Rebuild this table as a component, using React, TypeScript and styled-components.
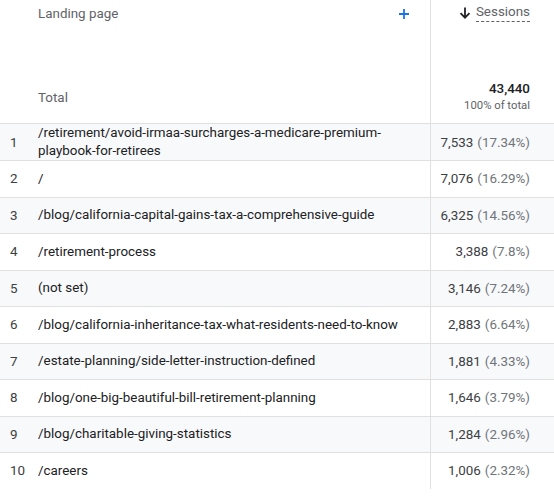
import React from "react";
import styled, { createGlobalStyle } from "styled-components";

const Global = createGlobalStyle`
  html, body { margin: 0; padding: 0; background: #ffffff; }
  body { font-family: Roboto, "Noto Sans", Arial, sans-serif; }
`;

const Table = styled.div`
  width: 554px;
  display: flex;
  flex-direction: column;
  font-family: Roboto, "Noto Sans", Arial, sans-serif;
  font-size: 13.4px;
  color: #3c4043;
`;

const Grid = styled.div`
  display: grid;
  grid-template-columns: 38px 392px 124px;
`;

const HeaderRow = styled(Grid)`
  height: 71px;
`;

const TotalRow = styled(Grid)`
  height: 52px;
  align-items: stretch;
`;

const DataRow = styled(Grid)<{ $shaded: boolean }>`
  min-height: 35.5px;
  border-top: 1px solid #e0e0e0;
  background: ${(p) => (p.$shaded ? "#f8f9fa" : "#ffffff")};
`;

const HeadDim = styled.div`
  grid-column: 1 / 3;
  display: flex;
  align-items: flex-start;
  justify-content: space-between;
  padding: 4px 20px 0 38px;
  line-height: 20px;
  color: #5f6368;
`;

const AddButton = styled.span`
  display: flex;
  width: 12px;
  height: 20px;
  align-items: center;
  justify-content: center;
`;

const HeadMetric = styled.div`
  border-left: 1px solid #e0e0e0;
  display: flex;
  justify-content: flex-end;
  align-items: flex-start;
  padding: 3px 24px 0 0;
  gap: 5px;
`;

const SortArrow = styled.span`
  display: flex;
  height: 20px;
  align-items: center;
`;

const MetricName = styled.span`
  line-height: 18px;
  color: #5f6368;
  border-bottom: 1px dashed #5f6368;
`;

const TotalLabel = styled.div`
  grid-column: 1 / 3;
  display: flex;
  align-items: center;
  padding-left: 38px;
  color: #5f6368;
`;

const TotalCell = styled.div`
  border-left: 1px solid #e0e0e0;
  display: flex;
  flex-direction: column;
  align-items: flex-end;
  justify-content: center;
  padding-right: 24px;
`;

const TotalValue = styled.span`
  font-weight: 500;
  font-size: 13.4px;
  line-height: 18px;
  color: #202124;
`;

const TotalSub = styled.span`
  font-size: 11.3px;
  line-height: 16px;
  color: #5f6368;
`;

const IndexCell = styled.div`
  display: flex;
  align-items: center;
  padding-left: 10px;
  color: #3c4043;
`;

const NameCell = styled.div`
  display: flex;
  align-items: center;
  padding-right: 14px;
  line-height: 18px;
  color: #202124;
`;

const ValueCell = styled.div`
  border-left: 1px solid #e0e0e0;
  display: flex;
  align-items: center;
  justify-content: flex-end;
  padding-right: 24px;
  color: #3c4043;
  white-space: nowrap;
`;

const Pct = styled.span`
  color: #70757a;
  margin-left: 4px;
`;

const rows: [string, string, string][] = [
  ["/retirement/avoid-irmaa-surcharges-a-medicare-premium-playbook-for-retirees", "7,533", "(17.34%)"],
  ["/", "7,076", "(16.29%)"],
  ["/blog/california-capital-gains-tax-a-comprehensive-guide", "6,325", "(14.56%)"],
  ["/retirement-process", "3,388", "(7.8%)"],
  ["(not set)", "3,146", "(7.24%)"],
  ["/blog/california-inheritance-tax-what-residents-need-to-know", "2,883", "(6.64%)"],
  ["/estate-planning/side-letter-instruction-defined", "1,881", "(4.33%)"],
  ["/blog/one-big-beautiful-bill-retirement-planning", "1,646", "(3.79%)"],
  ["/blog/charitable-giving-statistics", "1,284", "(2.96%)"],
  ["/careers", "1,006", "(2.32%)"],
];

export default function App() {
  return (
    <>
      <Global />
      <Table>
        <HeaderRow>
          <HeadDim>
            <span>Landing page</span>
            <AddButton>
              <svg width="12" height="12" viewBox="0 0 12 12">
                <path d="M6 1v10M1 6h10" stroke="#1a73e8" strokeWidth="1.8" fill="none" />
              </svg>
            </AddButton>
          </HeadDim>
          <HeadMetric>
            <SortArrow>
              <svg width="12" height="12" viewBox="0 0 12 12">
                <path d="M6 0.5v10" stroke="#202124" strokeWidth="1.8" fill="none" />
                <path d="M1.5 6.2L6 10.7l4.5-4.5" stroke="#202124" strokeWidth="1.8" fill="none" />
              </svg>
            </SortArrow>
            <MetricName>Sessions</MetricName>
          </HeadMetric>
        </HeaderRow>
        <TotalRow>
          <TotalLabel>Total</TotalLabel>
          <TotalCell>
            <TotalValue>43,440</TotalValue>
            <TotalSub>100% of total</TotalSub>
          </TotalCell>
        </TotalRow>
        {rows.map(([name, value, pct], i) => (
          <DataRow key={i} $shaded={i % 2 === 0}>
            <IndexCell>{i + 1}</IndexCell>
            <NameCell>{name}</NameCell>
            <ValueCell>
              {value}
              <Pct>{pct}</Pct>
            </ValueCell>
          </DataRow>
        ))}
      </Table>
    </>
  );
}
